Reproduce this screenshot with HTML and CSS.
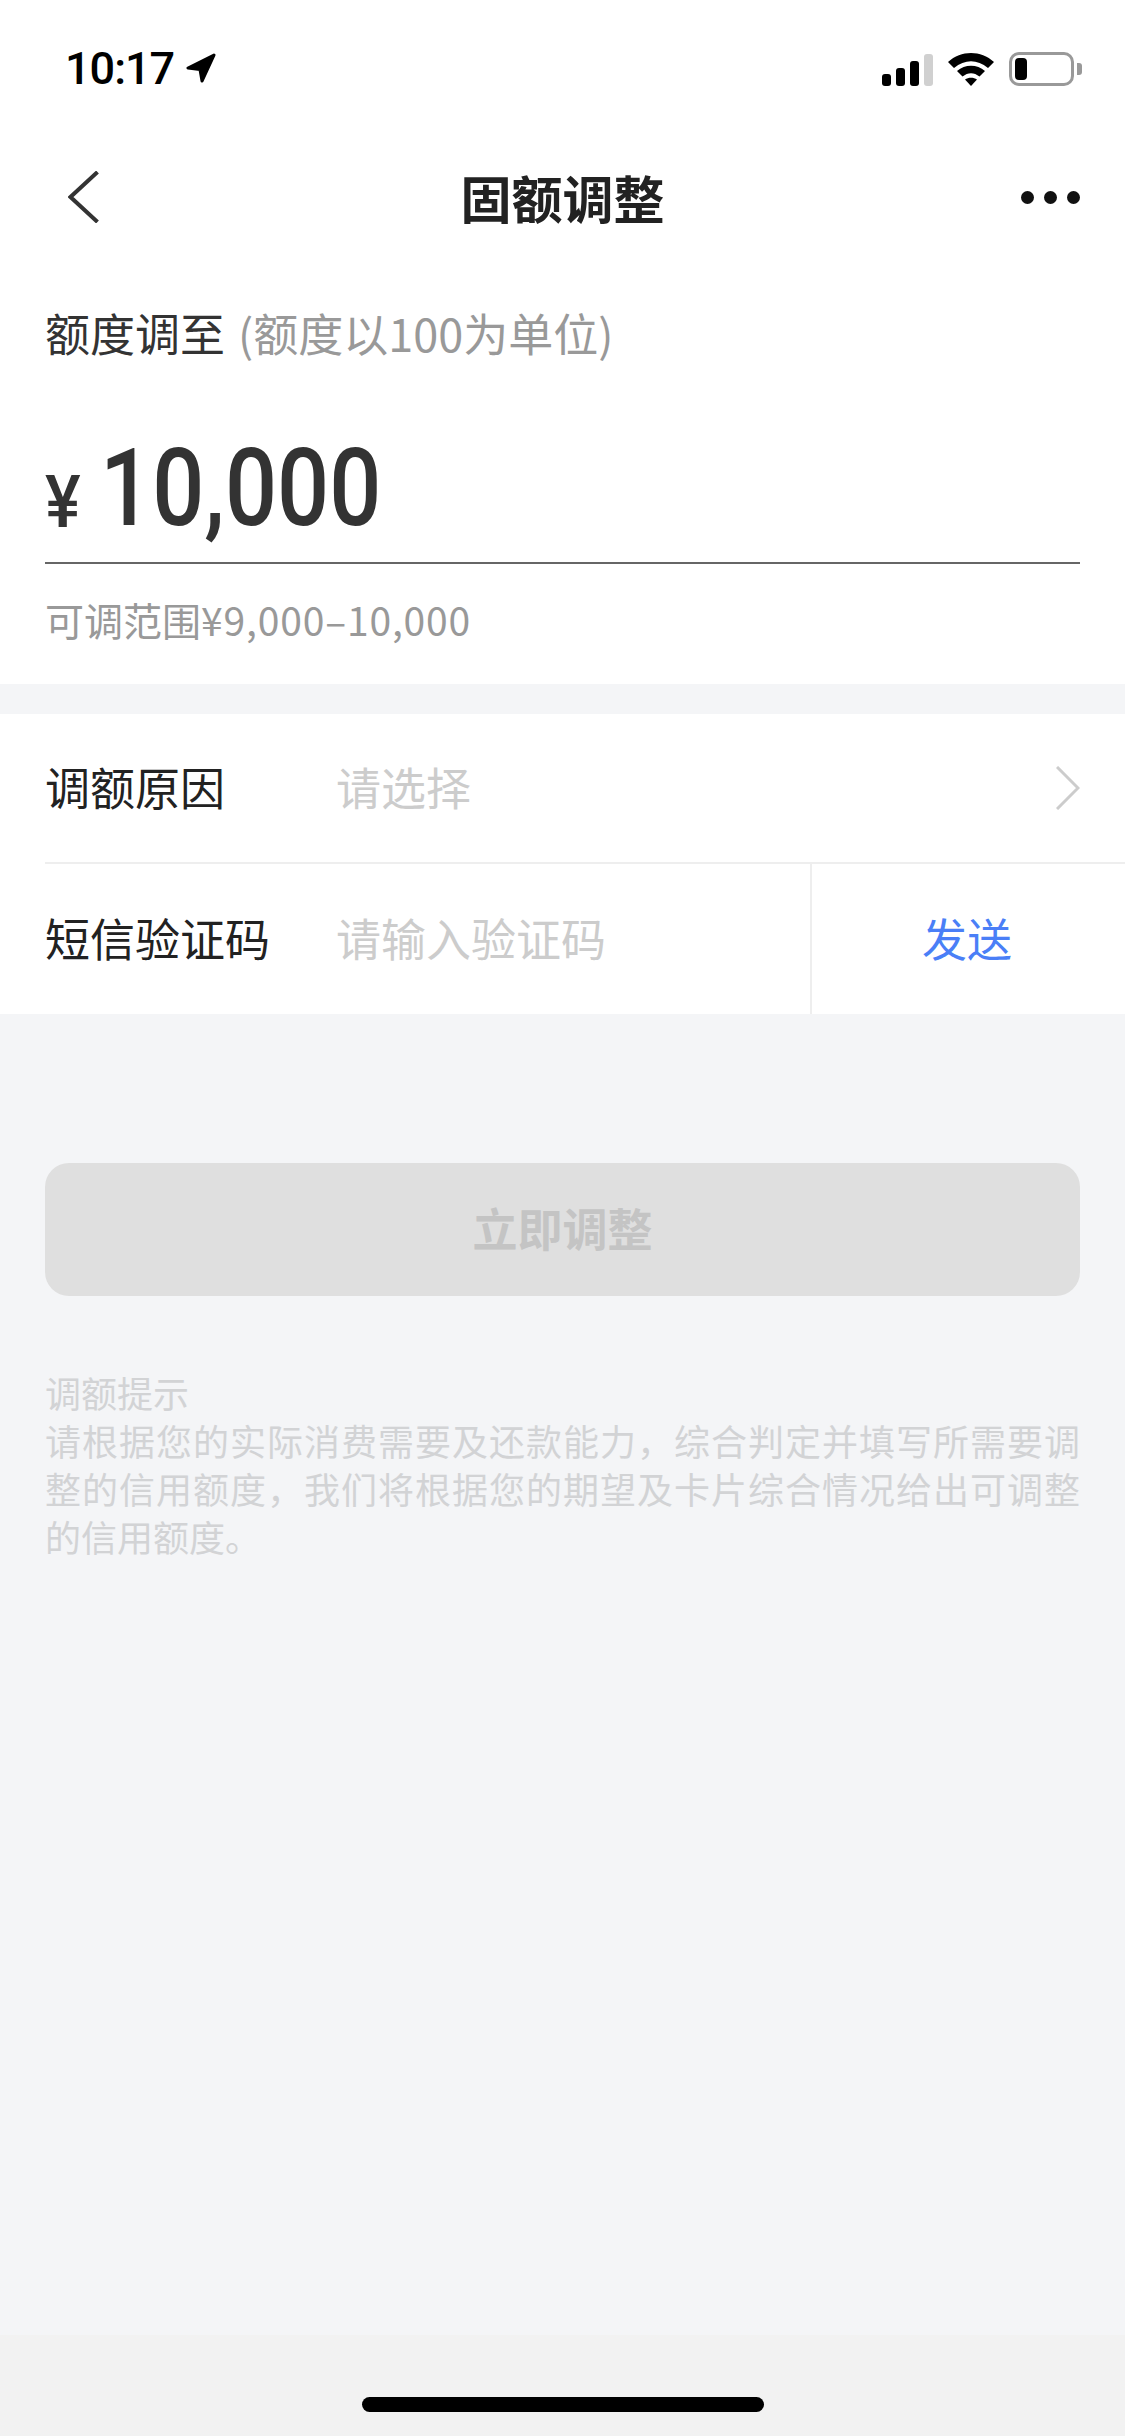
FILE: index.html
```html
<!DOCTYPE html>
<html lang="zh-CN">
<head>
    <meta charset="UTF-8">
    <meta name="viewport" content="width=device-width, initial-scale=1.0">
    <title>固额调整</title>
    <link rel="stylesheet" href="styles.css">
</head>
<body>
    <div class="phone">
        <div class="status-bar">
            <div class="status-time">
                <span>10:17</span>
                <svg class="icon-location" viewBox="0 0 30 30"><path d="M28 2 L2 15 L14 16.500 L16 28 Z" fill="#000" stroke="#000" stroke-width="3" stroke-linejoin="round"/></svg>
            </div>
            <div class="status-icons">
                <div class="signal">
                    <span class="bar bar-1"></span>
                    <span class="bar bar-2"></span>
                    <span class="bar bar-3"></span>
                    <span class="bar bar-4"></span>
                </div>
                <svg class="icon-wifi" viewBox="0 0 46 33">
                    <path d="M0 9 C13 -3 33 -3 46 9 L40 15 C29 6 17 6 6 15 Z" fill="#000"/>
                    <path d="M9 18 C17 11 29 11 37 18 L31.500 23.500 C26 19 20 19 14.500 23.500 Z" fill="#000"/>
                    <path d="M17 26.500 C20.500 24 25.500 24 29 26.500 L23 33 Z" fill="#000"/>
                </svg>
                <div class="battery">
                    <div class="battery-body"><span class="battery-level"></span></div>
                    <span class="battery-nub"></span>
                </div>
            </div>
        </div>

        <div class="nav-bar">
            <svg class="icon-back" viewBox="0 0 30 52"><path d="M29 1 L2 26 L29 51" fill="none" stroke="#333" stroke-width="4"/></svg>
            <h1>固额调整</h1>
            <div class="more"><span></span><span></span><span></span></div>
        </div>

        <section class="amount-card">
            <p class="amount-label">额度调至<span class="amount-note">(额度以100为单位)</span></p>
            <div class="amount-value">
                <span class="amount-currency">¥</span>
                <span class="amount-number">10,000</span>
            </div>
            <p class="amount-range">可调范围<span class="amount-limits">¥9,000–10,000</span></p>
        </section>

        <section class="form-card">
            <div class="form-row form-row-first">
                <span class="form-label">调额原因</span>
                <span class="form-placeholder">请选择</span>
                <svg class="icon-next" viewBox="0 0 24 44"><path d="M1 1 L22 22 L1 43" fill="none" stroke="#ccc" stroke-width="3"/></svg>
            </div>
            <div class="form-row form-row-code">
                <span class="form-label">短信验证码</span>
                <span class="form-placeholder">请输入验证码</span>
                <span class="send-code">发送</span>
            </div>
        </section>

        <div class="submit">立即调整</div>

        <div class="tips">
            <p>调额提示</p>
            <p>请根据您的实际消费需要及还款能力，综合判定并填写所需要调整的信用额度，我们将根据您的期望及卡片综合情况给出可调整的信用额度。</p>
        </div>

        <div class="home-area"><span class="home-indicator"></span></div>
    </div>
</body>
</html>
```

FILE: styles.css
```css
* {
    box-sizing: border-box;
    margin: 0;
    padding: 0;
}

body {
    font-family: "Noto Sans CJK SC", "Noto Sans", sans-serif;
    background: #f4f5f7;
    color: #222;
}

.phone {
    width: 1125px;
    height: 2436px;
    display: flex;
    flex-direction: column;
    background: #f4f5f7;
    overflow: hidden;
}

.status-bar {
    height: 135px;
    background: white;
    padding: 50px 43px 0 65px;
    display: flex;
    justify-content: space-between;
    align-items: flex-start;
}

.status-time {
    display: flex;
    align-items: center;
    gap: 12px;
    height: 36px;
    font-family: Roboto, sans-serif;
    font-weight: 500;
    font-size: 45px;
    letter-spacing: -1px;
    color: #000;
}

.icon-location {
    width: 30px;
    height: 30px;
}

.status-icons {
    display: flex;
    align-items: flex-end;
    gap: 15px;
    height: 36px;
}

.signal {
    display: flex;
    align-items: flex-end;
    gap: 5px;
}

.bar {
    width: 9px;
    background: #000;
    border-radius: 3px;
}

.bar-1 { height: 12px; }
.bar-2 { height: 18px; }
.bar-3 { height: 25px; }
.bar-4 { height: 32px; background: #d0d0d0; }

.icon-wifi {
    width: 46px;
    height: 33px;
}

.battery {
    display: flex;
    align-items: center;
    gap: 3px;
}

.battery-body {
    width: 65px;
    height: 34px;
    border: 3px solid #999;
    border-radius: 10px;
    padding: 3px;
}

.battery-level {
    display: block;
    width: 12px;
    height: 22px;
    background: #000;
    border-radius: 4px;
}

.battery-nub {
    width: 5px;
    height: 12px;
    background: #999;
    border-radius: 0 3px 3px 0;
}

.nav-bar {
    height: 128px;
    background: white;
    padding: 0 45px 4px 68px;
    display: flex;
    justify-content: space-between;
    align-items: center;
    position: relative;
}

.icon-back {
    width: 31px;
    height: 52px;
}

.nav-bar h1 {
    position: absolute;
    left: 0;
    right: 0;
    text-align: center;
    font-size: 51px;
    font-weight: 700;
    color: #222;
}

.more {
    display: flex;
    gap: 10px;
}

.more span {
    width: 13px;
    height: 13px;
    border-radius: 50%;
    background: #111;
}

.amount-card {
    background: white;
    padding: 38px 45px 0;
    height: 421px;
}

.amount-label {
    font-size: 45px;
    line-height: 64px;
    color: #333;
}

.amount-note {
    margin-left: 13px;
    color: #999;
}

.amount-value {
    display: flex;
    align-items: flex-end;
    height: 199px;
    padding-bottom: 24px;
    border-bottom: 2px solid #666;
    color: #333;
    font-family: Roboto, sans-serif;
}

.amount-currency {
    font-size: 73px;
    font-weight: 500;
    line-height: 72px;
    width: 55px;
    transform: scaleX(0.92);
    transform-origin: left bottom;
}

.amount-number {
    font-size: 108px;
    font-weight: 500;
    line-height: 100px;
    transform: scaleX(0.85);
    transform-origin: left bottom;
}

.amount-range {
    margin-top: 27px;
    font-size: 39px;
    line-height: 56px;
    color: #999;
}

.amount-limits {
    letter-spacing: 0.85px;
}

.form-card {
    margin-top: 30px;
    background: white;
    height: 300px;
}

.form-row {
    display: flex;
    align-items: center;
    margin-left: 45px;
    font-size: 45px;
}

.form-row-first {
    height: 150px;
    padding-right: 45px;
    border-bottom: 2px solid #eee;
}

.form-row-code {
    height: 150px;
}

.form-label {
    width: 291px;
    margin-bottom: 4px;
    color: #222;
}

.form-placeholder {
    flex: 1;
    margin-bottom: 4px;
    color: #ccc;
}

.icon-next {
    width: 24px;
    height: 44px;
}

.send-code {
    width: 315px;
    height: 100%;
    padding: 0 3px 4px 0;
    display: flex;
    align-items: center;
    justify-content: center;
    color: #4a7ff7;
    border-left: 2px solid #eee;
}

.submit {
    margin: 149px 45px 0;
    height: 133px;
    padding-bottom: 4px;
    border-radius: 24px;
    background: #dfdfdf;
    color: #c4c4c4;
    font-size: 45px;
    font-weight: 700;
    display: flex;
    align-items: center;
    justify-content: center;
}

.tips {
    margin: 72px 45px 0;
    font-size: 36px;
    line-height: 48px;
    color: #d2d3d5;
    text-align: justify;
}

.home-area {
    margin-top: auto;
    height: 101px;
    background: #f2f2f2;
    display: flex;
    justify-content: center;
    padding-top: 62px;
}

.home-indicator {
    width: 402px;
    height: 15px;
    border-radius: 8px;
    background: #000;
}
```
